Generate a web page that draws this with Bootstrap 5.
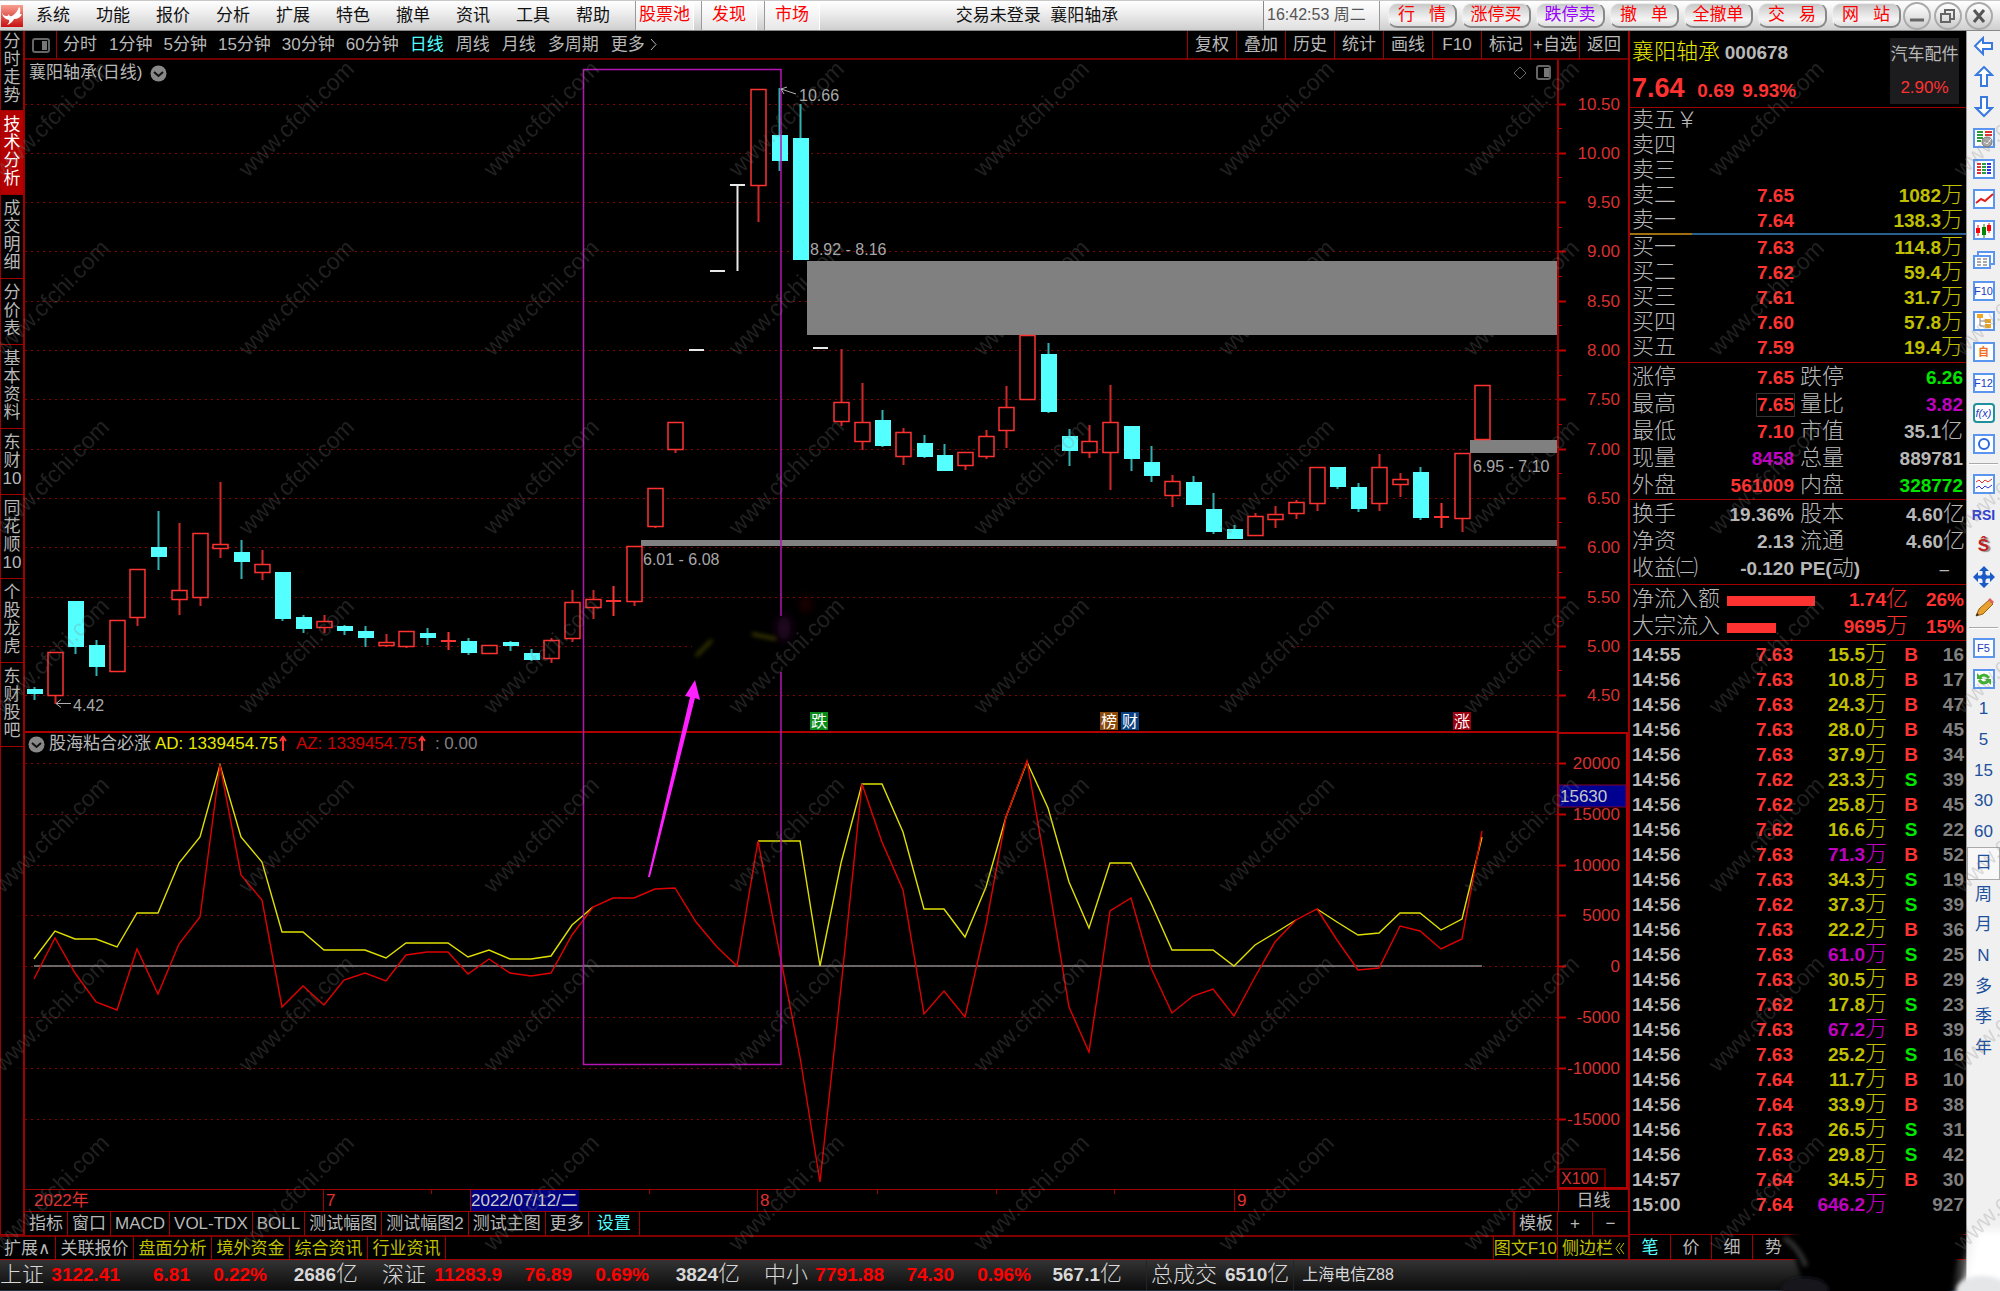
<!DOCTYPE html>
<html lang="zh-CN">
<head>
<meta charset="utf-8">
<meta name="viewport" content="width=device-width, initial-scale=1">
<title>襄阳轴承 000678</title>
<link href="https://cdn.jsdelivr.net/npm/bootstrap@5.3.0/dist/css/bootstrap.min.css" rel="stylesheet">
<style>
:root{--line:#a00000;--up:#ff3232;--dn:#54ffff;--txt:#b8b8b8;--yel:#c0c000;--mag:#c000c0;--grn:#00e600}
body{background:#000;color:var(--txt);font-family:"Liberation Sans","Noto Sans CJK SC",sans-serif;font-size:17px;line-height:20px;font-weight:400;height:100vh;min-height:1280px;min-width:1500px;overflow:hidden}
button,a{font:inherit;color:inherit;text-decoration:none;background:none;border:0;padding:0;white-space:nowrap}
a:hover{color:inherit}
table{border-collapse:collapse;table-layout:fixed;width:100%}
td,th{padding:0;font-weight:inherit;white-space:nowrap}
b{font-weight:700;font-size:19px}
.c-up{color:var(--up)}.c-yel{color:var(--yel)}.c-mag{color:var(--mag)}.c-grn{color:var(--grn)}.c-cyan{color:var(--dn)}.c-dim{color:#808080}

/* title bar */
.topbar{height:31px;background:linear-gradient(#fff,#eee 40%,#cfcfcf);border-top:1px solid #c8c8c8;border-bottom:1px solid #888;color:#111}
.topbar .menu a{width:60px;text-align:center}
.hot{height:29px;line-height:28px;padding:0 10px;margin-right:7px;color:#f00;border-left:1px solid #999;border-right:1px solid #fff;background:rgba(255,255,255,.5)}
.hot.first{padding:0 3px}
.clock{width:117px;height:29px;line-height:28px;padding-left:3px;font-size:16px;color:#555;border-left:1px solid #888;border-right:1px solid #999;background:rgba(255,255,255,.35)}
.pills{gap:5px}
.pill{width:69px;height:25px;border-radius:9px;border:1px solid #eee;border-right:2px solid #888;border-bottom:2px solid #888;background:linear-gradient(#c9c9c9,#f4f4f4 70%,#ddd);color:#f00;line-height:20px}
.keep{white-space:pre}
.winbtns{gap:3px;margin:0 7px 0 2px}
.round{width:28px;height:28px;border-radius:50%;border:2px solid #aaa;background:linear-gradient(#fff,#ccc)}
.round svg{display:block;margin:auto}

/* left rail */
.rail{width:25px;border-left:1px solid var(--line);border-right:2px solid var(--line);border-bottom:1px solid var(--line)}
.rail button{display:block;width:100%;padding:5px 1px 6px;border-bottom:1px solid var(--line);white-space:normal;word-break:break-all;line-height:18px;text-align:center}
.rail button:first-child{padding:2px 1px 5px}
.rail .on{background:#b40000;color:#fff}

.periods{height:29px;border-bottom:2px solid #700000}
.periods .views a{margin-right:12px}
.periods .views .minute{margin-right:11px}
.periods .pane-btn{width:32px;height:27px;border-right:1px solid var(--line);margin-right:6px}
.tools button{width:49px;height:28px;border-left:1px solid var(--line)}

.stage{position:relative;min-height:0}
.stage svg.plot{position:absolute;inset:0;width:100%;height:100%}
.legend-top{position:absolute;left:4px;top:3px}
.legend-low{position:absolute;left:3px}
.legend-ico{position:absolute;right:76px;top:5px}
.plot text{font-size:17px}

.axis-row{height:23px;border-top:1px solid var(--line);border-bottom:1px solid var(--line);line-height:21px}
.axis-row .dates{position:relative;color:#e03030}
.axis-row .dates span{position:absolute;top:0;height:21px;padding-left:2px;border-left:1px solid var(--line)}
.axis-row .dates .week{height:4px}
.axis-row .dates .start{border:0}
.axis-row .dates .pick{background:#000080;color:#ccc;width:109px;padding-left:0;white-space:nowrap}
.side-cell{width:70px;border-left:1px solid var(--line);text-align:center}
.tabs{height:23px;line-height:23px}
.tabs a{padding:0 4px;border-right:1px solid var(--line);height:100%}
.tabs .pm{width:35px;text-align:center}
.tabs2{height:25px;border-top:2px solid #800000;border-bottom:1px solid var(--line);line-height:23px}
.tabs2 a{padding:0 5px 0 4px;border-right:1px solid var(--line);height:100%}
.tabs2 .l{border-left:1px solid var(--line)}
.caret-up{font-family:"DejaVu Sans",sans-serif;line-height:0}

/* quote panel */
.quote{width:338px;border-left:2px solid var(--line)}
.quote .lbl,.quote .u{font-size:22px;font-weight:300}
.quote .head{height:76px;padding:3px 7px 0 2px}
.quote .name{font-size:22px;line-height:36px;color:#e8e800;font-weight:300}
.quote .last{line-height:20px}
.quote .px{font-size:27px}
.sector{width:69px;height:66px;margin-top:4px;background:#1c1c1e;text-align:center;line-height:33px}
.sec{border-top:1px solid var(--line);padding-left:2px}
.sec td{height:25px;line-height:23px;padding-top:2px;overflow:visible}
.sec b,.sec .lbl,.sec .u{line-height:0}
.sec.mid td{height:27px;line-height:25px}
.sec.mid{padding-top:1px}
.sec.gap-below{padding-bottom:2px}
.sec.deals{padding-top:1px}
.sec .r{text-align:right}
.boxed{display:inline-block;outline:1px solid #333}
.sec .boxed{line-height:22px}
.split{height:2px;background:linear-gradient(90deg,#a07010 62px,#286090 62px)}
.bar{height:10px;background:var(--up)}
.qtabs{height:26px;border-top:1px solid var(--line);border-bottom:1px solid var(--line)}
.qtabs button{width:41px;padding-top:2px;border-right:1px solid var(--line)}

/* status line */
.status{position:relative;height:31px;background:linear-gradient(#333,#0c0c0c);border-bottom:1px solid #203040;line-height:29px;color:#d8d8d8}
.idx{width:382px;padding-right:24px}
.idx .n,.status .n{font-size:22px;font-weight:300}
.idx span{white-space:nowrap}
.idx .n{width:46px}.idx .v{width:74px}.idx .d{width:70px}.idx .p{width:77px}.idx .a{width:91px}
.status .red b{color:#f00}
.status .a i,.status .tot i{font-style:normal;font-size:22px;font-weight:300;line-height:0}

/* icon strip */
.strip{width:34px;background:#f0f0f0;border-left:1px solid #999;color:#1c4f9c}
.strip button{display:flex;flex:1 1 0;align-items:center;justify-content:center;width:100%}
.strip .g1{height:428px}.strip .g2{height:154px}.strip .g3{height:430px}
.strip .rule{height:2px;margin:4px 2px;background:#aaa;border-bottom:1px solid #fff}
.strip .ibox{width:22px;height:20px;border:2px solid #5a96f0;background:#fff;color:#2040c0;font-size:11px;line-height:16px;text-align:center;display:flex;justify-content:center}
.strip .sel{border:1px solid #aaa;background:#f8f8f8}
.watermark{position:fixed;inset:0;width:100%;height:100%;pointer-events:none}
.smear{position:fixed;right:0;bottom:0;width:230px;height:75px;pointer-events:none}
</style>
<script src="https://cdn.jsdelivr.net/npm/bootstrap@5.3.0/dist/js/bootstrap.bundle.min.js"></script>
</head>
<body class="d-flex flex-column">

<header class="topbar d-flex align-items-center flex-shrink-0">
  <svg width="23" height="24" viewBox="0 0 23 24"><defs><linearGradient id="lg" x1="0" y1="0" x2="0" y2="1"><stop offset="0" stop-color="#f8a090"/><stop offset="1" stop-color="#c81010"/></linearGradient></defs><rect x="1" y="1" width="22" height="22" fill="url(#lg)"/><path d="M2 7Q2 12 7 12Q8 12 9 10Q9 13 12 12Q17 9 19 3Q21 4 20 9Q20 11 22 10Q20 15 14 15Q12 19 7 21Q10 18 9 16Q2 15 2 7Z" fill="#fff"/></svg>
  <nav class="menu d-flex">
    <a href="#">系统</a><a href="#">功能</a><a href="#">报价</a><a href="#">分析</a><a href="#">扩展</a><a href="#">特色</a><a href="#">撤单</a><a href="#">资讯</a><a href="#">工具</a><a href="#">帮助</a>
  </nav>
  <nav class="d-flex ms-2 ps-1"><a class="hot first" href="#">股票池</a><a class="hot" href="#">发现</a><a class="hot" href="#">市场</a></nav>
  <div class="flex-fill text-center ms-5 ps-2 keep">交易未登录  襄阳轴承</div>
  <div class="ps-5 ms-4"></div>
  <div class="clock me-2">16:42:53 周二</div>
  <div class="pills d-flex align-items-center">
    <button class="pill keep">行   情</button><button class="pill">涨停买</button><button class="pill" style="color:#90f">跌停卖</button><button class="pill keep">撤   单</button><button class="pill">全撤单</button><button class="pill keep">交   易</button><button class="pill keep">网   站</button>
  </div>
  <div class="winbtns d-flex align-items-center">
    <button class="round" aria-label="最小化"><svg width="20" height="20"><path d="M3 14h14" stroke="#666" stroke-width="3"/></svg></button>
    <button class="round" aria-label="还原"><svg width="20" height="20" fill="none" stroke="#666" stroke-width="2"><path d="M7 8V4h9v9h-4"/><rect x="3" y="8" width="9" height="8"/></svg></button>
    <button class="round" aria-label="关闭"><svg width="20" height="20"><path d="M5 4l10 12M15 4L5 16" stroke="#555" stroke-width="3"/></svg></button>
  </div>
</header>

<div class="d-flex flex-fill" style="min-height:0">
  <div class="d-flex flex-column flex-fill" style="min-width:0">
    <div class="d-flex flex-fill" style="min-height:0">
      <div class="d-flex flex-column flex-fill" style="min-width:0">
        <div class="d-flex flex-fill" style="min-height:0">
          <nav class="rail flex-shrink-0">
            <button>分时走势</button><button class="on">技术分析</button><button>成交明细</button><button>分价表</button><button>基本资料</button><button>东财10</button><button>同花顺10</button><button>个股龙虎</button><button>东财股吧</button>
          </nav>
          <main class="d-flex flex-column flex-fill" style="min-width:0">
            <div class="periods d-flex align-items-center flex-shrink-0">
              <button class="pane-btn" aria-label="侧栏"><svg width="18" height="17" fill="none" stroke="#666" stroke-width="2"><rect x="1" y="2" width="16" height="13" rx="2"/><rect x="11" y="5" width="3" height="7" fill="#777" stroke="#777"/></svg></button>
              <nav class="views d-flex"><a href="#">分时</a><a class="minute" href="#">1分钟</a><a class="minute" href="#">5分钟</a><a class="minute" href="#">15分钟</a><a class="minute" href="#">30分钟</a><a class="minute" href="#">60分钟</a><a href="#" class="c-cyan">日线</a><a href="#">周线</a><a href="#">月线</a><a href="#">多周期</a><a href="#" class="d-flex align-items-center">更多<svg class="ms-1" width="9" height="15" fill="none" stroke="#b8b8b8"><path d="M2 2l5 5.500-5 5.500"/></svg></a></nav>
              <div class="tools d-flex ms-auto"><button>复权</button><button>叠加</button><button>历史</button><button>统计</button><button>画线</button><button>F10</button><button>标记</button><button>+自选</button><button>返回</button></div>
            </div>
            <section class="stage flex-fill" id="stage">
              <svg class="plot" id="plot"></svg>
              <div class="legend-top d-flex align-items-center">襄阳轴承(日线) <svg class="ms-2" width="17" height="17"><circle cx="8.500" cy="8.500" r="8" fill="#888"/><path d="M4 7l4.500 4L13 7" fill="none" stroke="#111" stroke-width="2"/></svg></div>
              <div class="legend-ico d-flex gap-2"><svg width="15" height="17"><path d="M7 2l6 6-6 6-6-6z" fill="none" stroke="#666"/></svg><svg width="16" height="16" fill="none" stroke="#666" stroke-width="2"><rect x="1" y="1" width="13" height="13" rx="2"/><rect x="9" y="4" width="3" height="7" fill="#777" stroke="#777"/></svg></div>
              <div class="legend-low d-flex align-items-center" id="legendLow"><svg class="me-1" width="17" height="17"><circle cx="8.500" cy="8.500" r="8" fill="#888"/><path d="M4 7l4.500 4L13 7" fill="none" stroke="#111" stroke-width="2"/></svg><span class="me-1">股海粘合必涨</span><span style="color:#e8e800">AD: 1339454.75</span><svg class="me-2" width="10" height="18"><path d="M5 16V3M2 6l3-4 3 4" fill="none" stroke="#ff3232" stroke-width="2"/></svg><span style="color:#d00000">AZ: 1339454.75</span><svg class="me-2" width="10" height="18"><path d="M5 16V3M2 6l3-4 3 4" fill="none" stroke="#ff3232" stroke-width="2"/></svg><span class="c-dim">: 0.00</span></div>
            </section>
            <div class="axis-row d-flex flex-shrink-0"><div class="dates flex-fill" id="dates"></div><div class="side-cell">日线</div></div>
            <div class="tabs d-flex flex-shrink-0"><a href="#">指标</a><a href="#">窗口</a><a href="#">MACD</a><a href="#">VOL-TDX</a><a href="#">BOLL</a><a href="#">测试幅图</a><a href="#">测试幅图2</a><a href="#">测试主图</a><a href="#">更多</a><a href="#" class="c-cyan px-2">设置</a>
              <a href="#" class="ms-auto" style="border-left:2px solid var(--line)">模板</a><a href="#" class="pm px-0">+</a><a href="#" class="pm px-0 border-0">−</a></div>
          </main>
        </div>
        <div class="tabs2 d-flex flex-shrink-0"><a href="#">扩展<span class="caret-up">∧</span></a><a href="#">关联报价</a><a href="#" class="c-yel">盘面分析</a><a href="#" class="c-yel">境外资金</a><a href="#" class="c-yel">综合资讯</a><a href="#" class="c-yel">行业资讯</a>
          <a href="#" class="c-yel ms-auto l px-0">图文F10</a><a href="#" class="c-yel border-0 px-0 ps-1 d-flex align-items-center" style="width:70px">侧边栏<svg width="13" height="15" fill="none" stroke="#c0c000"><path d="M7 2L3 7.500 7 13M11 2L7 7.500l4 5.500"/></svg></a></div>
      </div>

      <aside class="quote d-flex flex-column flex-shrink-0">
        <div class="head d-flex">
          <div class="flex-fill"><div><span class="name">襄阳轴承</span> <b>000678</b></div><div class="c-up last pt-2"><b class="px me-2">7.64</b> <b class="me-2">0.69</b><b>9.93%</b></div></div>
          <div class="sector">汽车配件<div class="c-up">2.90%</div></div>
        </div>
        <table class="sec d-block"><tbody id="asks"></tbody></table>
        <div class="split"></div>
        <table class="d-block sec border-0" style="height:127px"><tbody id="bids"></tbody></table>
        <table class="sec mid d-block"><tbody id="facts"></tbody></table>
        <table class="sec mid gap-below d-block"><tbody id="facts2"></tbody></table>
        <table class="sec mid d-block"><tbody>
          <tr class="c-up"><td style="width:95px"><span class="lbl" style="color:var(--txt)">净流入额</span></td><td style="width:94px"><div class="bar" style="width:88px"></div></td><td class="r" style="width:87px"><b>1.74</b><span class="u">亿</span></td><td class="r" style="width:56px"><b>26%</b></td></tr>
          <tr class="c-up"><td><span class="lbl" style="color:var(--txt)">大宗流入</span></td><td><div class="bar" style="width:49px"></div></td><td class="r"><b>9695</b><span class="u">万</span></td><td class="r"><b>15%</b></td></tr>
        </tbody></table>
        <table class="sec deals d-block"><tbody id="ticks"></tbody></table>
        <div class="qtabs d-flex mt-auto"><button class="c-cyan">笔</button><button>价</button><button>细</button><button class="border-0">势</button></div>
      </aside>
    </div>
    <footer class="status d-flex flex-shrink-0" id="status"></footer>
  </div>

  <aside class="strip flex-shrink-0">
    <div class="g1 d-flex flex-column">
      <button aria-label="后退"><svg width="22" height="20" fill="#fff" stroke="#3a7ae0" stroke-width="2"><path d="M2 10l8-8v5h9v6h-9v5z"/></svg></button>
      <button aria-label="上"><svg width="20" height="22" fill="#fff" stroke="#3a7ae0" stroke-width="2"><path d="M10 1l8 8h-5v11H7V9H2z"/></svg></button>
      <button aria-label="下"><svg width="20" height="22" fill="#fff" stroke="#3a7ae0" stroke-width="2"><path d="M10 20l8-8h-5V1H7v11H2z"/></svg></button>
      <button aria-label="自选"><svg width="22" height="20"><rect x="1" y="1" width="20" height="18" fill="#fff" stroke="#5a96f0" stroke-width="2"/><path d="M4 4h6M4 7h6M4 10h6M4 13h4" stroke="#2a9a3a" stroke-width="2"/><path d="M12 4h7M12 7h7" stroke="#e03030" stroke-width="2"/><circle cx="14" cy="14" r="5" fill="#aaa" stroke="#777"/><path d="M11 14l3 2 4-5" stroke="#fff" fill="none"/></svg></button>
      <button aria-label="行情表"><svg width="22" height="20"><rect x="1" y="1" width="20" height="18" fill="#fff" stroke="#5a96f0" stroke-width="2"/><path d="M4 5h4M4 8h4M4 11h4M4 14h4" stroke="#e03030" stroke-width="2"/><path d="M9 5h4M9 8h4M9 11h4M9 14h4" stroke="#20a040" stroke-width="2"/><path d="M14 5h4M14 8h4M14 11h4M14 14h4" stroke="#3030e0" stroke-width="2"/></svg></button>
      <button aria-label="走势"><svg width="22" height="20"><rect x="1" y="1" width="20" height="18" fill="#fff" stroke="#5a96f0" stroke-width="2"/><path d="M3 14l5-4 4 2 8-7" fill="none" stroke="#e02020" stroke-width="2"/></svg></button>
      <button aria-label="K线"><svg width="22" height="20"><rect x="1" y="1" width="20" height="18" fill="#fff" stroke="#5a96f0" stroke-width="2"/><path d="M5 5v11M16 3v10" stroke="#f00"/><path d="M11 4v14" stroke="#080"/><path d="M3 8h4v5H3zM14 5h4v6h-4z" fill="#f00"/><path d="M9 7h4v8H9z" fill="#080"/></svg></button>
      <button aria-label="报表"><svg width="22" height="20"><rect x="5" y="2" width="16" height="12" fill="#fff" stroke="#5a96f0" stroke-width="2"/><rect x="1" y="6" width="16" height="12" fill="#fff" stroke="#5a96f0" stroke-width="2"/><path d="M4 9h4M10 9h4M4 12h4M10 12h4M4 15h4M10 15h4" stroke="#555"/></svg></button>
      <button><span class="ibox">F10</span></button>
      <button aria-label="结构"><svg width="22" height="20"><rect x="1" y="1" width="20" height="18" fill="#fff" stroke="#5a96f0" stroke-width="2"/><path d="M7 7v8h6M7 10h6" fill="none" stroke="#888"/><path d="M4 3h6v4H4zM12 8h6v4h-6zM12 13h6v4h-6z" fill="#f0a820"/></svg></button>
      <button><span class="ibox fw-bold" style="color:#f07020">自</span></button>
      <button><span class="ibox">F12</span></button>
      <button><span class="ibox rounded-1 fst-italic" style="border-color:#20909a">f(x)</span></button>
      <button aria-label="圈"><svg width="22" height="20"><rect x="1" y="1" width="20" height="18" fill="#fff" stroke="#5a96f0" stroke-width="2"/><circle cx="11" cy="10" r="5" fill="none" stroke="#2a6ae0" stroke-width="2"/></svg></button>
    </div>
    <div class="rule"></div>
    <div class="g2 d-flex flex-column">
      <button aria-label="指标"><svg width="22" height="20"><rect x="1" y="1" width="20" height="18" fill="#fff" stroke="#5a96f0" stroke-width="2"/><path d="M3 8l3-2 3 3 3-3 3 2 4-3" fill="none" stroke="#e03030"/><path d="M3 14l3-2 3 3 3-3 3 2 4-3" fill="none" stroke="#3030e0"/></svg></button>
      <button class="fw-bold" style="font-size:14px;color:#3040d0">RSI</button>
      <button class="fw-bold" style="color:#c02020;text-shadow:2px 1px 1px #888">Ŝ</button>
      <button aria-label="移动"><svg width="22" height="22" fill="#1a5ac8"><path d="M11 0l5 5H6zM11 22l5-5H6zM0 11l5-5v10zM22 11l-5-5v10z"/><path d="M11 5v12M5 11h12" stroke="#1a5ac8" stroke-width="3"/><circle cx="11" cy="11" r="3"/></svg></button>
      <button aria-label="画笔"><svg width="22" height="22"><path d="M3 19l3-7L16 3l4 4-10 10z" fill="#e8a030" stroke="#9a6010"/><path d="M15 3l2-2 4 4-2 2z" fill="#e06060"/><path d="M3 19l1-3 2 2z" fill="#222"/></svg></button>
    </div>
    <div class="rule"></div>
    <div class="g3 d-flex flex-column">
      <button><span class="ibox">F5</span></button>
      <button aria-label="刷新"><svg width="22" height="20"><rect x="1" y="1" width="20" height="18" fill="#fff" stroke="#5a96f0" stroke-width="2"/><path d="M6 9q5-6 10 0M16 11q-5 6-10 0" fill="none" stroke="#40b030" stroke-width="3"/><path d="M4 4v6h6zM18 16v-6h-6z" fill="#40b030"/></svg></button>
      <button>1</button><button>5</button><button>15</button><button>30</button><button>60</button><button class="sel">日</button><button>周</button><button>月</button><button>N</button><button>多</button><button>季</button><button>年</button>
    </div>
  </aside>
</div>

<svg class="smear" viewBox="0 0 230 75"><defs><filter id="soft" x="-60%" y="-60%" width="220%" height="220%"><feGaussianBlur stdDeviation="5"/></filter><filter id="soft2" x="-30%" y="-30%" width="160%" height="160%"><feGaussianBlur stdDeviation="2"/></filter></defs>
  <path d="M18 20L60 2h128q10 10 2 30L178 90H40L30 58z" fill="#030303" filter="url(#soft2)"/>
  <path d="M14 22q14 8 22 28" stroke="#555" stroke-width="5" fill="none" opacity=".6" filter="url(#soft2)"/>
  <path d="M206 14h34v70h-50z" fill="#fff" filter="url(#soft)"/>
  <ellipse cx="35" cy="74" rx="24" ry="13" fill="#14181c" filter="url(#soft2)"/>
  <ellipse cx="212" cy="74" rx="26" ry="14" fill="#e4e6e8" filter="url(#soft2)"/>
</svg>
<svg class="watermark" aria-hidden="true"><defs><pattern id="wm" width="245" height="179" patternUnits="userSpaceOnUse" patternTransform="translate(235 54)"><text x="13" y="124" transform="rotate(-45 13 124)" font-size="23" fill="#808080" fill-opacity=".25">www.cfchi.com</text></pattern></defs><rect y="60" width="100%" height="100%" fill="url(#wm)"/></svg>

<script>
/* ---------- quote tables ---------- */
const unit = s => s.replace(/^([-\d.%]+)(\D*)$/, (m, n, u) => `<b>${n}</b>` + (u ? `<span class="u">${u}</span>` : ''));
const el = id => document.getElementById(id);
const book = rows => rows.map(([l, p, v]) => `<tr><td style="width:80px"><span class="lbl">${l}</span></td><td class="r c-up" style="width:82px">${p ? unit(p) : ''}</td><td class="r c-yel" style="width:169px">${v ? unit(v) : ''}</td></tr>`).join('');
el('asks').innerHTML = book([['卖五￥'], ['卖四'], ['卖三'], ['卖二', '7.65', '1082万'], ['卖一', '7.64', '138.3万']]);
el('bids').innerHTML = book([['买一', '7.63', '114.8万'], ['买二', '7.62', '59.4万'], ['买三', '7.61', '31.7万'], ['买四', '7.60', '57.8万'], ['买五', '7.59', '19.4万']]);
const facts = rows => rows.map(([a, b, c, d, e, f]) => `<tr><td style="width:80px"><span class="lbl">${a}</span></td><td class="r ${c}" style="width:82px">${unit(b)}</td><td style="width:64px;padding-left:6px"><span class="lbl">${d}</span></td><td class="r ${f}" style="width:105px">${unit(e)}</td></tr>`).join('');
el('facts').innerHTML = facts([['涨停', '7.65', 'c-up', '跌停', '6.26', 'c-grn'], ['最高', '7.65', 'c-up hi', '量比', '3.82', 'c-mag'], ['最低', '7.10', 'c-up', '市值', '35.1亿', ''], ['现量', '8458', 'c-mag', '总量', '889781', ''], ['外盘', '561009', 'c-up', '内盘', '328772', 'c-grn']]);
document.querySelector('.hi b').classList.add('boxed');
el('facts2').innerHTML = facts([['换手', '19.36%', '', '股本', '4.60亿', ''], ['净资', '2.13', '', '流通', '4.60亿', ''], ['收益㈡', '-0.120', '', '<b>PE(</b>动<b>)</b>', '–', 'pe']]);
document.querySelector('.pe').style.paddingRight = '16px';
el('ticks').innerHTML = `14:55 7.63 15.5 B 16
14:56 7.63 10.8 B 17
14:56 7.63 24.3 B 47
14:56 7.63 28.0 B 45
14:56 7.63 37.9 B 34
14:56 7.62 23.3 S 39
14:56 7.62 25.8 B 45
14:56 7.62 16.6 S 22
14:56 7.63 71.3 B 52
14:56 7.63 34.3 S 19
14:56 7.62 37.3 S 39
14:56 7.63 22.2 B 36
14:56 7.63 61.0 S 25
14:56 7.63 30.5 B 29
14:56 7.62 17.8 S 23
14:56 7.63 67.2 B 39
14:56 7.63 25.2 S 16
14:56 7.64 11.7 B 10
14:56 7.64 33.9 B 38
14:56 7.63 26.5 S 31
14:56 7.63 29.8 S 42
14:57 7.64 34.5 B 30
15:00 7.64 646.2 - 927`.split('\n').map(r => {
  const [t, p, v, s, n] = r.split(' ');
  return `<tr><td style="width:70px"><b>${t}</b></td><td class="r c-up" style="width:91px"><b>${p}</b></td><td class="r ${v > 50 ? 'c-mag' : 'c-yel'}" style="width:94px">${unit(v + '万')}</td><td class="text-center ps-1 ${s == 'B' ? 'c-up' : 'c-grn'}" style="width:44px"><b>${s == '-' ? '' : s}</b></td><td class="r c-dim" style="width:33px"><b>${n}</b></td></tr>`;
}).join('');
el('status').innerHTML = [['上证', '3122.41', '6.81', '0.22%', '2686亿'], ['深证', '11283.9', '76.89', '0.69%', '3824亿'], ['中小', '7791.88', '74.30', '0.96%', '567.1亿']].map(([n, v, d, p, a]) =>
  `<div class="idx red d-flex flex-shrink-0"><span class="n">${n}</span><span class="v text-end"><b>${v}</b></span><span class="d text-end"><b>${d}</b></span><span class="p text-end"><b>${p}</b></span><span class="a text-end"><b style="color:inherit">${a.slice(0, -1)}</b><i>亿</i></span></div>`).join('') +
  `<div class="tot px-1 d-flex border-end border-start border-dark"><span class="n me-2">总成交</span><span><b>6510</b><i>亿</i></span></div><div class="ps-2" style="font-size:16px">上海电信Z88</div>`;

/* ---------- charts: design space 1603 x 1129, origin (25,60) ---------- */
/* candle: kind, body top, body bottom, high, low (u rising, d falling, x cross, w white) */
const K = `d 689 694 687 700|u 652 695 652 704|d 601 647 601 654|d 645 667 640 676|u 620 671 620 671|u 569 617 569 626|d 547 557 511 570|u 590 599 523 615|u 533 597 533 606|u 544 548 482 558|d 552 562 540 579|u 564 572 550 580|d 572 619 572 621|d 617 629 615 633|u 621 627 615 633|d 626 631 625 635|d 631 638 626 647|u 642 645 634 647|u 631 646 631 648|d 633 638 628 645|x 641 641 632 650|d 641 653 638 655|u 645 653 645 654|d 642 646 641 651|d 653 660 649 661|u 640 658 638 663|u 602 638 590 642|u 599 607 590 619|x 601 601 586 616|u 546 601 546 606|u 488 526 488 528|u 422 449 422 453|w 350 350 350 350|w 271 271 271 271|w 185 185 185 271|u 89 185 89 222|d 135 161 88 171|d 138 260 104 260|w 348 348 348 348|u 402 421 349 426|u 422 441 383 450|d 420 446 410 447|u 432 456 428 465|d 443 457 435 458|d 455 471 444 471|u 452 465 452 470|u 436 456 430 459|u 407 430 386 448|u 335 399 335 399|d 354 412 343 413|d 436 451 429 466|u 441 452 425 458|u 422 452 385 490|d 426 459 426 471|d 462 476 446 482|u 481 495 475 507|d 482 505 476 505|d 509 532 493 534|d 529 539 525 539|u 516 535 513 536|u 514 519 506 528|u 502 513 500 519|u 467 503 467 511|d 467 487 467 489|d 487 509 483 512|u 467 503 454 511|u 479 484 473 497|d 472 518 467 520|x 517 517 503 528|u 453 518 453 532|u 385 439 385 439`.split('|').map(s => s.split(' '));
/* indicator curves, thirds of a pixel below y=720 */
const AD = [718,633,658,658,680,578,578,430,350,135,350,425,637,637,691,691,691,713,670,670,670,712,691,716,716,708,615,560,534,534,508,503,605,680,737,362,362,362,737,430,191,191,335,567,567,650,500,290,125,265,485,625,429,429,550,691,691,691,737,675,640,600,568,605,645,640,578,578,629,598,350];
const AZ = [778,655,760,847,871,688,822,672,590,135,465,540,862,799,854,780,758,784,704,695,695,763,717,758,767,758,645,560,534,534,508,503,605,680,737,362,690,1010,1385,800,191,365,510,882,814,891,615,290,122,480,860,995,573,533,745,878,828,808,887,770,665,600,568,660,750,745,617,632,688,657,333];

function draw() {
  const W = el('stage').clientWidth, H = el('stage').clientHeight;
  const X = x => Math.round((x - 25) * W / 1603), Y = y => Math.round((y - 60) * H / 1129);
  const cx = i => X(34 + 20.69 * i);
  let o = '';
  const line = (a, b, c, d, col, w = 1, ex = '') => o += `<line x1="${a}" y1="${b}" x2="${c}" y2="${d}" stroke="${col}" stroke-width="${w}" ${ex}/>`;
  const rect = (a, b, c, d, f, s = 'none', sw = 1) => o += `<rect x="${a}" y="${b}" width="${c - a}" height="${d - b}" fill="${f}" stroke="${s}" stroke-width="${sw}"/>`;
  const text = (x, y, s, f, ex = '') => o += `<text x="${x}" y="${y}" fill="${f}" ${ex}>${s}</text>`;
  const R = W, A = X(1558);
  const grid = (y, label, to = A) => {
    line(0, y + .5, to, y + .5, '#8c0000', 1, 'stroke-dasharray="2 4"');
    line(A, y + .5, A + 8, y + .5, '#c00000', 2);
    text(R - 8, y + 6, label, '#d83030', 'text-anchor="end"');
  };
  for (let i = 0; i < 13; i++) {
    const p = 10.5 - i * .5, y = Y(103.5 + i * 49.3);
    grid(y, p.toFixed(2));
    if (i < 12) line(A, Y(128 + i * 49.3) + .5, A + 4, Y(128 + i * 49.3) + .5, '#c00000');
  }
  rect(X(692), Y(640), X(1287), Y(652), '#000');
  [20000, 15000, 10000, 5000, 0, -5000, -10000, -15000].forEach((v, i) => grid(Y(763 + i * 50.8), v));
  rect(X(807), Y(261), A, Y(335), '#808080');
  rect(X(641), Y(540), A, Y(546), '#808080');
  rect(X(1470), Y(440), A, Y(453), '#808080');
  K.forEach(([k, a, b, h, l], i) => {
    const x = cx(i), c = { u: '#ff3232', x: '#ff3232', d: '#54ffff', w: '#e8e8e8' }[k], wc = { u: '#d02828', x: '#ff3232', d: '#30b0b0', w: '#e8e8e8' }[k];
    a = Y(+a); b = Y(+b); h = Y(+h); l = Y(+l);
    if (h < a) line(x + .5, h, x + .5, a, wc, 2);
    if (l > b) line(x + .5, b, x + .5, l, wc, 2);
    if (k == 'd') rect(x - 7, a, x + 9, b, c);
    else if (k == 'u') rect(x - 7, a + .5, x + 8, b + .5, '#000', c, 1.500);
    else line(x - 7, a, x + 8, a, c, 2);
  });
  /* pane borders and axis frame */
  line(A, 0, A, Y(733), '#a00000', 2);
  line(0, Y(732), A, Y(732), '#b00000', 2);
  rect(A, Y(733), R - 1, Y(1188), 'none', '#b00000', 2);
  line(X(34), Y(966), X(1482), Y(966), '#888', 1.500);
  /* a segment that both curves share is drawn once, in the AZ colour */
  const path = (arr, col, over) => {
    let d = '';
    arr.forEach((v, i) => { d += (i && over && over[i] == v && over[i - 1] == arr[i - 1] || !i ? 'M' : 'L') + cx(i) + ' ' + Y(720 + v / 3); });
    o += `<path d="${d}" fill="none" stroke="${col}" stroke-width="1.400"/>`;
  };
  path(AD, '#e0e000', AZ); path(AZ, '#e00000');
  rect(A + 1, Y(785), R - 2, Y(807), '#000090', '#800030');
  text(A + 2, Y(796) + 6, '15630', '#c8c8c8');
  rect(A + 1, Y(1169), A + 47, Y(1188), 'none', '#b00000');
  text(A + 3, Y(1179) + 5, 'X100', '#d83030', 'style="font-size:16px"');
  /* selection frame and arrow */
  const L = X(583) + .5, M = X(781), T = Y(69) + .5, B = Y(1064) + .5;
  o += `<path d="M${M} ${Y(616)}V${T}H${L}V${B}H${M}V${Y(672)}" fill="none" stroke="#b414b4" stroke-width="1.500"/>`;
  o += `<ellipse cx="${M + 3}" cy="${Y(628)}" rx="7" ry="13" fill="#400840" opacity=".6" filter="url(#soft)"/><ellipse cx="${X(806)}" cy="${Y(604)}" rx="5" ry="9" fill="#700000" opacity=".35" filter="url(#soft)"/>`;
  o += `<path d="M${X(696)} ${Y(656)}l16 -16M${X(752)} ${Y(634)}l24 5" stroke="#707000" stroke-width="3" opacity=".6" filter="url(#soft2)"/>`;
  o += `<path d="M${X(648)} ${Y(877)}L${X(690)} ${Y(697)}L${X(685)} ${Y(696)}L${X(695)} ${Y(680)}L${X(700)} ${Y(700)}L${X(695)} ${Y(698)}L${X(650)} ${Y(877)}Z" fill="#ff20ff"/>`;
  /* annotations */
  const note = (x, y, s) => text(X(x), Y(y) + 6, s, '#a8a8a8', 'style="font-size:16px"');
  note(73, 705, '4.42'); note(799, 95, '10.66'); note(810, 249, '8.92 - 8.16'); note(643, 559, '6.01 - 6.08'); note(1473, 466, '6.95 - 7.10');
  o += `<path d="M${X(71)} ${Y(703) + .5}h-15m5 -4l-5 4 5 4M${X(796)} ${Y(94)}l-15 -5m6 -2l-6 2 3 5" fill="none" stroke="#b0b0b0"/>`;
  [[819, '跌', '#0a8a1a'], [1109, '榜', '#8a4a08'], [1130, '财', '#0a4080'], [1462, '涨', '#9a0010']].forEach(([x, s, f]) => {
    rect(X(x) - 9, Y(721) - 9, X(x) + 9, Y(721) + 9, f);
    text(X(x), Y(721) + 6, s, '#fff', 'text-anchor="middle" style="font-size:16px"');
  });
  el('plot').innerHTML = o;
  el('legendLow').style.top = (Y(734)) + 'px';
  el('dates').innerHTML = [[32, '2022年', 'start'], [323, '7'], [431, '', 'week'], [470, '2022/07/12/二', 'pick'], [649, '', 'week'], [757, '8'], [877, '', 'week'], [996, '', 'week'], [1114, '', 'week'], [1234, '9']].map(([x, s, c]) => `<span class="${c || ''}" style="left:${X(x)}px">${s}</span>`).join('');
}
draw();
new ResizeObserver(draw).observe(el('stage'));
</script>
</body>
</html>
